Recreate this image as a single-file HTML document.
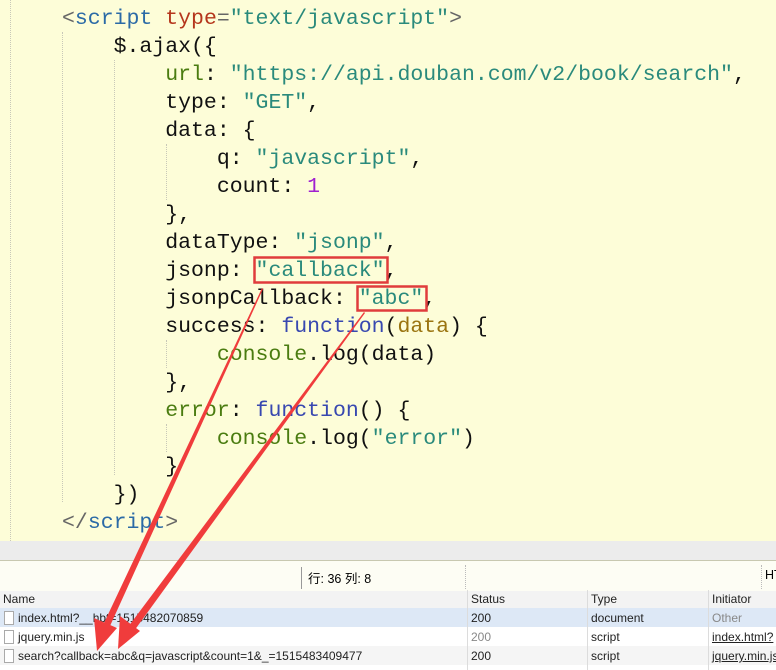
<!DOCTYPE html>
<html><head><meta charset="utf-8"><style>
body{margin:0;width:776px;height:670px;overflow:hidden;background:#fff;position:relative;font-family:"Liberation Sans",sans-serif}
#ed{position:absolute;left:0;top:0;width:776px;height:541px;background:#fdfdd8}
#code{position:absolute;left:62px;top:5px;font-family:"Liberation Mono",monospace;font-size:21.5px;line-height:28px;white-space:pre;color:#111}
.g{position:absolute;border-left:1px dotted #c8c8b8;width:0}
.t{color:#2b6aa6}.p{color:#666}.a{color:#b5361c}.s{color:#2a8a7c}.k{color:#4a7c10}.f{color:#3848b0}.d{color:#9a7410}.n{color:#a020d0}
#gray{position:absolute;left:0;top:541px;width:776px;height:19px;background:#ececec}
#sb{position:absolute;left:0;top:560px;width:776px;height:30px;background:#fdfdf4;border-top:1px solid #c8c8b0;border-bottom:1px solid #8bb8c8;font-family:"Liberation Sans","Noto Sans CJK SC",sans-serif;font-size:12.5px}
.row{position:absolute;left:0;width:776px;height:19px;font-size:12px;line-height:21px;color:#222}
.row span{position:absolute;top:0}
.sep{position:absolute;top:590px;height:80px;border-left:1px solid #dcdcdc}
.ic{display:inline-block;width:8px;height:12px;border:1px solid #aaa;background:#fff;position:absolute;left:4px;top:3px}
</style></head><body>
<div id="ed">
<div class="g" style="left:10px;top:0;height:541px"></div>
<div class="g" style="left:62px;top:32px;height:470px"></div>
<div class="g" style="left:114px;top:60px;height:415px"></div>
<div class="g" style="left:166px;top:144px;height:56px"></div>
<div class="g" style="left:166px;top:340px;height:28px"></div>
<div class="g" style="left:166px;top:424px;height:28px"></div>
<div id="code"><span class="p">&lt;</span><span class="t">script</span> <span class="a">type</span><span class="p">=</span><span class="s">"text/javascript"</span><span class="p">&gt;</span>
    $.ajax({
        <span class="k">url</span>: <span class="s">"https://api.douban.com/v2/book/search"</span>,
        type: <span class="s">"GET"</span>,
        data: {
            q: <span class="s">"javascript"</span>,
            count: <span class="n">1</span>
        },
        dataType: <span class="s">"jsonp"</span>,
        jsonp: <span class="s">"callback"</span>,
        jsonpCallback: <span class="s">"abc"</span>,
        success: <span class="f">function</span>(<span class="d">data</span>) {
            <span class="k">console</span>.log(data)
        },
        <span class="k">error</span>: <span class="f">function</span>() {
            <span class="k">console</span>.log(<span class="s">"error"</span>)
        }
    })
<span class="p">&lt;/</span><span class="t">script</span><span class="p">&gt;</span></div>
</div>
<div id="gray"></div>
<div id="sb">
<div style="position:absolute;left:301px;top:6px;height:22px;border-left:1px solid #999"></div>
<div style="position:absolute;left:308px;top:7px">行: 36 列: 8</div>
<div style="position:absolute;left:465px;top:4px;height:24px;border-left:1px dotted #bbb"></div>
<div style="position:absolute;left:761px;top:4px;height:24px;border-left:1px dotted #bbb"></div>
<div style="position:absolute;left:765px;top:7px">HT</div>
</div>
<div class="row" style="top:591px;height:17px;line-height:17px;background:#f3f3f3;border-bottom:1px solid #d8d8d8"><span style="left:3px">Name</span><span style="left:471px">Status</span><span style="left:591px">Type</span><span style="left:712px">Initiator</span></div>
<div class="row" style="top:608px;background:#dde8f6"><i class="ic"></i><span style="left:18px">index.html?__hbt=1515482070859</span><span style="left:471px">200</span><span style="left:591px">document</span><span style="left:712px;color:#888">Other</span></div>
<div class="row" style="top:627px;background:#fff"><i class="ic"></i><span style="left:18px">jquery.min.js</span><span style="left:471px;color:#888">200</span><span style="left:591px">script</span><span style="left:712px;text-decoration:underline">index.html?</span></div>
<div class="row" style="top:646px;background:#f5f5f5"><i class="ic"></i><span style="left:18px">search?callback=abc&amp;q=javascript&amp;count=1&amp;_=1515483409477</span><span style="left:471px">200</span><span style="left:591px">script</span><span style="left:712px;text-decoration:underline">jquery.min.js</span></div>
<div class="sep" style="left:467px"></div><div class="sep" style="left:587px"></div><div class="sep" style="left:708px"></div>
<svg width="776" height="670" style="position:absolute;left:0;top:0">
<rect x="254.5" y="257.5" width="133" height="25" fill="none" stroke="#e03c3c" stroke-width="2.5"/>
<rect x="357.5" y="286.5" width="69" height="24" fill="none" stroke="#e03c3c" stroke-width="2.5"/>
<polygon points="262,288 263,289 110,626 104,623" fill="#f03c3c"/>
<polygon points="97,651 94,618 117,628" fill="#f03c3c"/>
<polygon points="364,312 365,313 134,631 128,627" fill="#f03c3c"/>
<polygon points="118,649 120,616 140,631" fill="#f03c3c"/>
</svg>
</body></html>
